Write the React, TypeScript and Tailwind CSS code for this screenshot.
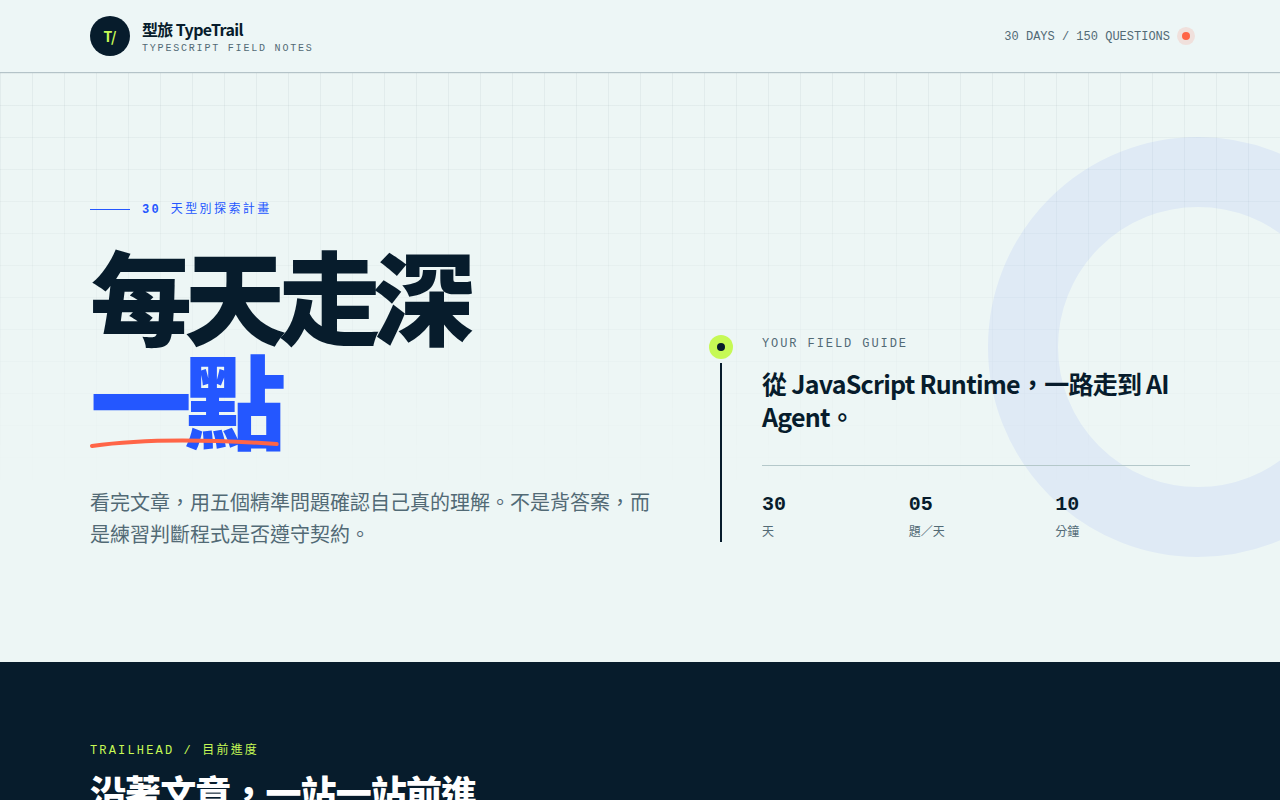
import React from 'react';

const mono = "font-['Liberation_Mono','Noto_Sans_CJK_TC',monospace]";

const stats = [
    { value: '30', label: '天' },
    { value: '05', label: '題／天' },
    { value: '10', label: '分鐘' },
];

function Header() {
    return (
        <header className="border-b border-[#b4c3c8] bg-[#edf6f6]">
            <div className="mx-auto flex h-[72px] max-w-[1100px] items-center justify-between">
                <a href="#top" className="flex items-center gap-3">
                    <span className="grid size-10 place-items-center rounded-full bg-[#071c2c] text-sm font-bold text-[#c6f955]">
                        T/
                    </span>
                    <span className="flex flex-col pt-1">
                        <strong className="text-base leading-5 font-bold tracking-[-0.04em]">型旅 TypeTrail</strong>
                        <small className={`${mono} pt-0.5 text-[10px] leading-4 tracking-[0.18em] text-[#526a75]`}>
                            TYPESCRIPT FIELD NOTES
                        </small>
                    </span>
                </a>
                <div className={`${mono} flex items-center gap-3 text-xs text-[#526a75]`}>
                    <span className="pt-0.5">30 DAYS / 150 QUESTIONS</span>
                    <span className="size-2 rounded-full bg-[#ff6547] ring-5 ring-[#ff6547]/15" />
                </div>
            </div>
        </header>
    );
}

function FieldGuide() {
    return (
        <aside className="mb-2 flex gap-[29px]">
            <div className="flex w-6 shrink-0 flex-col items-center gap-1">
                <span className="grid size-6 place-items-center rounded-full bg-[#c6f955]">
                    <span className="size-2 rounded-full bg-[#071c2c]" />
                </span>
                <span className="w-0.5 flex-1 bg-[#071c2c]" />
            </div>
            <div className="flex-1">
                <p className={`${mono} pt-px text-xs leading-4 tracking-[0.16em] text-[#526a75]`}>YOUR FIELD GUIDE</p>
                <h2 className="mt-[15px] text-[25px] leading-[33px] font-bold tracking-[-0.03em]">
                    從 JavaScript Runtime，一路走到 AI Agent。
                </h2>
                <dl className="mt-8 grid grid-cols-3 gap-3 border-t border-[#b4c8ca] pt-[27px]">
                    {stats.map((stat) => (
                        <div key={stat.label} className={`${mono} flex flex-col-reverse`}>
                            <dt className="mt-[7px] text-xs leading-[18px] text-[#526a75]">{stat.label}</dt>
                            <dd className="text-xl leading-6 font-bold">{stat.value}</dd>
                        </div>
                    ))}
                </dl>
            </div>
        </aside>
    );
}

function Hero() {
    return (
        <section id="top" className="relative overflow-hidden">
            <div className="absolute inset-0 bg-[linear-gradient(#071c2c0c_1px,transparent_1px),linear-gradient(90deg,#071c2c0c_1px,transparent_1px)] mask-[linear-gradient(to_bottom,black,transparent_72%)] bg-size-[32px_32px]" />
            <div className="absolute top-16 -right-32 size-[420px] rounded-full border-[70px] border-[#2457ff]/7" />
            <div className="relative mx-auto grid max-w-[1100px] grid-cols-[minmax(0,1fr)_481px] items-end gap-12 pt-32 pb-28">
                <div>
                    <p className={`${mono} flex items-center gap-3 text-xs leading-4 tracking-[0.2em] text-[#2457ff]`}>
                        <span className="h-px w-10 bg-[#2457ff]" />
                        <span className="pt-px">
                            <b>30</b> 天型別探索計畫
                        </span>
                    </p>
                    <h1 className="mt-6 text-[102px] leading-[104px] font-black tracking-[-0.075em]">
                        每天走深
                        <br />
                        <span className="relative inline-block text-[#2457ff]">
                            一點
                            <svg
                                className="absolute bottom-0 left-0 h-4 w-full"
                                viewBox="0 0 190 16"
                                preserveAspectRatio="none"
                                fill="none"
                                aria-hidden="true"
                            >
                                <path
                                    d="M2 12C50 5 115 5 188 10"
                                    stroke="#ff6547"
                                    strokeWidth="4"
                                    strokeLinecap="round"
                                />
                            </svg>
                        </span>
                    </h1>
                    <p className="mt-9 max-w-[570px] text-xl leading-8 text-[#526a75]">
                        看完文章，用五個精準問題確認自己真的理解。不是背答案，而是練習判斷程式是否遵守契約。
                    </p>
                </div>
                <FieldGuide />
            </div>
        </section>
    );
}

function Trail() {
    return (
        <section className="bg-[#071c2c] pt-20 pb-24 text-white">
            <div className="mx-auto flex max-w-[1100px] items-end justify-between">
                <div>
                    <p className={`${mono} pt-px text-xs leading-4 tracking-[0.18em] text-[#c6f955]`}>
                        TRAILHEAD / 目前進度
                    </p>
                    <h2 className="mt-2 text-4xl leading-[48px] font-black tracking-[-0.025em]">
                        沿著文章，一站一站前進
                    </h2>
                </div>
                <span className={`${mono} text-xs leading-4 text-[#a3b3bb]`}>01 — 30</span>
            </div>
        </section>
    );
}

export default function App() {
    return (
        <main className="min-h-screen overflow-hidden bg-[#edf6f5] font-['Noto_Sans_CJK_TC',sans-serif] text-[#071c2c]">
            <Header />
            <Hero />
            <Trail />
        </main>
    );
}
